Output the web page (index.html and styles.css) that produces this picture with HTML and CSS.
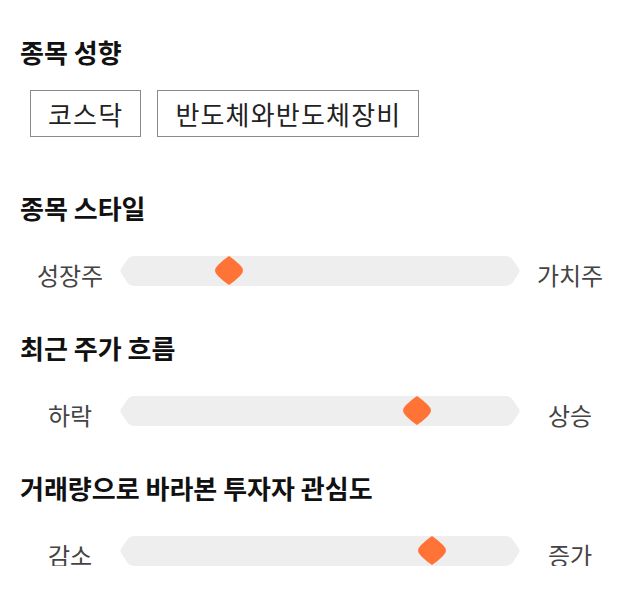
FILE: index.html
```html
<!DOCTYPE html>
<html>
<head>
    <meta charset="utf-8">
    <link rel="stylesheet" href="styles.css">
</head>

<body>
    <div class="page">
        <section class="block">
            <h2 class="block-title">종목 성향</h2>
            <div class="tags">
                <span class="tag">코스닥</span>
                <span class="tag">반도체와반도체장비</span>
            </div>
        </section>

        <section class="block">
            <h2 class="block-title">종목 스타일</h2>
            <div class="slider-row">
                <span class="slider-label">성장주</span>
                <div class="track">
                    <svg class="track-bg" viewBox="0 0 400 30" preserveAspectRatio="none">
                        <path d="M14 0 H386 Q390 0 393 4 L399 13 Q400 15 399 17 L393 26 Q390 30 386 30 H14 Q10 30 7 26 L1 17 Q0 15 1 13 L7 4 Q10 0 14 0 Z"></path>
                    </svg>
                    <svg class="thumb" style="left: 27.25%" viewBox="0 0 28 29">
                        <path d="M14 0 Q20 4 25 9 Q28 12 28 14.5 Q28 17 25 20 Q20 25 14 29 Q8 25 3 20 Q0 17 0 14.5 Q0 12 3 9 Q8 4 14 0 Z"></path>
                    </svg>
                </div>
                <span class="slider-label">가치주</span>
            </div>
        </section>

        <section class="block">
            <h2 class="block-title">최근 주가 흐름</h2>
            <div class="slider-row">
                <span class="slider-label">하락</span>
                <div class="track">
                    <svg class="track-bg" viewBox="0 0 400 30" preserveAspectRatio="none">
                        <path d="M14 0 H386 Q390 0 393 4 L399 13 Q400 15 399 17 L393 26 Q390 30 386 30 H14 Q10 30 7 26 L1 17 Q0 15 1 13 L7 4 Q10 0 14 0 Z"></path>
                    </svg>
                    <svg class="thumb" style="left: 74.25%" viewBox="0 0 28 29">
                        <path d="M14 0 Q20 4 25 9 Q28 12 28 14.5 Q28 17 25 20 Q20 25 14 29 Q8 25 3 20 Q0 17 0 14.5 Q0 12 3 9 Q8 4 14 0 Z"></path>
                    </svg>
                </div>
                <span class="slider-label">상승</span>
            </div>
        </section>

        <section class="block">
            <h2 class="block-title">거래량으로 바라본 투자자 관심도</h2>
            <div class="slider-row">
                <span class="slider-label">감소</span>
                <div class="track">
                    <svg class="track-bg" viewBox="0 0 400 30" preserveAspectRatio="none">
                        <path d="M14 0 H386 Q390 0 393 4 L399 13 Q400 15 399 17 L393 26 Q390 30 386 30 H14 Q10 30 7 26 L1 17 Q0 15 1 13 L7 4 Q10 0 14 0 Z"></path>
                    </svg>
                    <svg class="thumb" style="left: 78%" viewBox="0 0 28 29">
                        <path d="M14 0 Q20 4 25 9 Q28 12 28 14.5 Q28 17 25 20 Q20 25 14 29 Q8 25 3 20 Q0 17 0 14.5 Q0 12 3 9 Q8 4 14 0 Z"></path>
                    </svg>
                </div>
                <span class="slider-label">증가</span>
            </div>
        </section>
    </div>
</body>
</html>
```

FILE: styles.css
```css
:root {
    --text-dark: #111111;
    --text-label: #444444;
    --tag-border: #8a8a8a;
    --track: #eeeeee;
    --accent: #ff7337;
}

body {
    margin: 0;
    background: #ffffff;
    font-family: "Noto Sans CJK KR", "Noto Sans", sans-serif;
    color: var(--text-dark);
}

.page {
    width: 600px;
    padding: 34px 20px 0;
}

.block:nth-child(2) {
    margin-top: 53px;
}

.block + .block + .block {
    margin-top: 44px;
}

.block-title {
    margin: 0;
    font-size: 26px;
    font-weight: 700;
    line-height: 36px;
}

.tags {
    display: flex;
    gap: 16px;
    margin: 20px 0 0 10px;
}

.tag {
    padding: 0 17px;
    border: 1px solid var(--tag-border);
    font-size: 26px;
    line-height: 45px;
    letter-spacing: 1.2px;
    color: #222222;
}

.slider-row {
    display: grid;
    grid-template-columns: 100px 400px 100px;
    align-items: center;
    height: 30px;
    margin-top: 30px;
}

.slider-label {
    text-align: center;
    font-size: 24px;
    line-height: 30px;
    color: var(--text-label);
    position: relative;
    top: 4px;
}

.track {
    position: relative;
    height: 30px;
}

.track-bg {
    display: block;
    width: 100%;
    height: 30px;
}

.track-bg path {
    fill: var(--track);
}

.thumb {
    position: absolute;
    top: 0;
    width: 28px;
    height: 29px;
    transform: translateX(-50%);
}

.thumb path {
    fill: var(--accent);
}
```
